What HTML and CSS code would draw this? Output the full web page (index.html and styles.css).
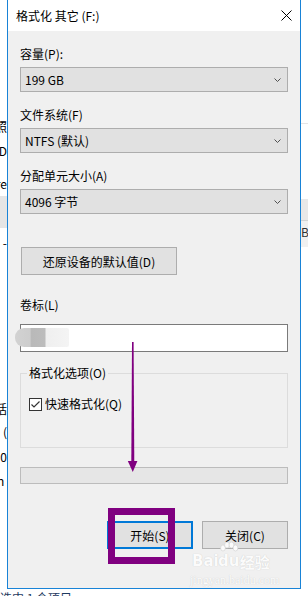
FILE: index.html
```html
<!DOCTYPE html>
<html lang="zh-CN">
<head>
    <meta charset="UTF-8">
    <meta name="viewport" content="width=device-width, initial-scale=1.0">
    <title>格式化 其它 (F:)</title>
    <link rel="stylesheet" href="styles.css">
</head>
<body>
    <div class="screen">
        <!-- bits of the explorer window behind the dialog -->
        <div class="behind-left">
            <div class="frag frag-1">关照</div>
            <div class="frag frag-2">ID</div>
            <div class="frag frag-3">re</div>
            <div class="frag-block"></div>
            <div class="frag frag-4">-</div>
            <div class="frag frag-5">包括</div>
            <div class="frag frag-6">(</div>
            <div class="frag frag-7">0</div>
            <div class="frag frag-8">n&nbsp;</div>
        </div>

        <div class="dialog">
            <div class="titlebar">
                <span class="title">格式化 其它 (F:)</span>
                <svg class="close" width="11" height="11" viewBox="0 0 11 11">
                    <path d="M0.5 0.5 L10.5 10.5 M10.5 0.5 L0.5 10.5" stroke="#000" stroke-width="1" fill="none"/>
                </svg>
            </div>

            <div class="panel">
                <div class="label first">容量(P):</div>
                <div class="combo">
                    <span>199 GB</span>
                    <svg width="7" height="4" viewBox="0 0 7 4"><polyline points="0.5,0.5 3.5,3.5 6.5,0.5" stroke="#505050" fill="none"/></svg>
                </div>

                <div class="label">文件系统(F)</div>
                <div class="combo">
                    <span>NTFS (默认)</span>
                    <svg width="7" height="4" viewBox="0 0 7 4"><polyline points="0.5,0.5 3.5,3.5 6.5,0.5" stroke="#505050" fill="none"/></svg>
                </div>

                <div class="label">分配单元大小(A)</div>
                <div class="combo">
                    <span>4096 字节</span>
                    <svg width="7" height="4" viewBox="0 0 7 4"><polyline points="0.5,0.5 3.5,3.5 6.5,0.5" stroke="#505050" fill="none"/></svg>
                </div>

                <div class="btn btn-reset">还原设备的默认值(D)</div>

                <div class="label label-volume">卷标(L)</div>
                <div class="textbox">
                    <div class="blur"></div>
                </div>

                <fieldset class="group">
                    <legend>格式化选项(O)</legend>
                    <div class="check-row">
                        <svg width="13" height="13" viewBox="0 0 13 13">
                            <rect x="0.5" y="0.5" width="12" height="12" fill="#fff" stroke="#333"/>
                            <polyline points="2.5,6.5 5,9 10.5,3.5" stroke="#333" stroke-width="1.2" fill="none"/>
                        </svg>
                        <span>快速格式化(Q)</span>
                    </div>
                </fieldset>

                <div class="progress"></div>

                <div class="actions">
                    <div class="btn btn-default">开始(S)</div>
                    <div class="btn">关闭(C)</div>
                </div>
            </div>
        </div>

        <div class="behind-right">
            <div class="rule"></div>
            <div class="col-head"></div>
            <div class="col-cell">B</div>
        </div>
    </div>

    <div class="statusbar">选中 1 个项目</div>

    <!-- annotations drawn over the screenshot -->
    <svg class="arrow" width="16" height="135" viewBox="0 0 16 135">
        <polygon points="7,2 8.6,2 9.3,122 6.3,122" fill="#800080"/>
        <polygon points="2.8,121 12.4,121 7.8,132" fill="#800080"/>
    </svg>
    <div class="highlight"></div>

    <div class="watermark">
        <div class="wm-logo">
            <span class="wm-bai">Bai</span>
            <span class="wm-paw">
                <svg width="20" height="12" viewBox="0 0 20 12">
                    <ellipse cx="4" cy="6" rx="2.4" ry="3" />
                    <ellipse cx="8" cy="3" rx="2.4" ry="3" />
                    <ellipse cx="12.5" cy="3" rx="2.4" ry="3" />
                    <ellipse cx="16.5" cy="6" rx="2.4" ry="3" />
                </svg>
                <span>du</span>
            </span>
            <span class="wm-jy">经验</span>
        </div>
        <div class="wm-url">jingyan.baidu.com</div>
    </div>
</body>
</html>
```

FILE: styles.css
```css
* {
    box-sizing: border-box;
}

body {
    margin: 0;
    width: 308px;
    height: 596px;
    overflow: hidden;
    position: relative;
    background-color: #ffffff;
    font-family: "Noto Sans CJK SC", "Microsoft YaHei", sans-serif;
    font-size: 12px;
    color: #000000;
}

.screen {
    display: flex;
    height: 589px;
}

/* Window behind the dialog */
.behind-left {
    width: 7px;
    display: flex;
    flex-direction: column;
    align-items: flex-end;
    overflow: hidden;
}

.frag {
    white-space: nowrap;
    line-height: 12px;
    flex-shrink: 0;
}

.frag-1 { margin-top: 121px; }
.frag-2 { margin-top: 12px; }
.frag-3 { margin-top: 21px; }
.frag-4 { margin-top: 9px; }
.frag-5 { margin-top: 154px; }
.frag-6 { margin-top: 11px; }
.frag-7 { margin-top: 13px; }
.frag-8 { margin-top: 12px; }

.frag-block {
    width: 7px;
    height: 32px;
    margin-top: 6px;
    flex-shrink: 0;
    background-color: #e5e5e5;
}

.behind-right {
    width: 7px;
    overflow: hidden;
}

.behind-right .rule {
    height: 1px;
    margin-top: 123px;
    background-color: #e5e5e5;
}

.behind-right .col-head {
    height: 22px;
    margin-top: 75px;
    background-color: #e8e8e8;
    border-bottom: 1px solid #d4d4d4;
}

.behind-right .col-cell {
    height: 26px;
    background-color: #f0f0f0;
    line-height: 22px;
    font-size: 12px;
    color: #333;
}

.statusbar {
    height: 7px;
    line-height: 17px;
    color: #1e3a5f;
    white-space: nowrap;
    overflow: hidden;
}

/* Dialog */
.dialog {
    width: 294px;
    height: 589px;
    border: 1px solid #1883d7;
    border-top: none;
    background-color: #f0f0f0;
    display: flex;
    flex-direction: column;
}

.titlebar {
    height: 31px;
    flex-shrink: 0;
    background-color: #ffffff;
    display: flex;
    align-items: center;
    justify-content: space-between;
    padding: 0 8px;
}

.title {
    line-height: 16px;
}

.panel {
    padding: 0 12px;
    display: flex;
    flex-direction: column;
}

.label {
    line-height: 16px;
    margin-top: 15px;
}

.label.first {
    margin-top: 15px;
}

.label-volume {
    margin-top: 22px;
}

.combo {
    height: 25px;
    margin-top: 5px;
    padding: 0 6px 0 4px;
    background-color: #e1e1e1;
    border: 1px solid #adadad;
    display: flex;
    align-items: center;
    justify-content: space-between;
}

.btn {
    height: 28px;
    background-color: #e1e1e1;
    border: 1px solid #adadad;
    display: flex;
    align-items: center;
    justify-content: center;
    width: 86px;
}

.btn-reset {
    width: 156px;
    margin-top: 33px;
    margin-left: 1px;
}

.btn-default {
    border: 2px solid #0078d7;
}

.textbox {
    position: relative;
    height: 28px;
    margin-top: 11px;
    background-color: #ffffff;
    border: 1px solid #7a7a7a;
}

/* blurred-out volume name */
.blur {
    position: absolute;
    left: -6px;
    top: 3px;
    width: 54px;
    height: 19px;
    border-radius: 9px 2px 2px 9px;
    background: linear-gradient(to right, #d2d2d2 0%, #cdcdcd 28%, #b9b9b9 30%, #bcbcbc 55%, #efefef 58%, #f4f4f4 100%);
}

.group {
    margin: 13px 0 0 0;
    padding: 15px 8px 35px 8px;
    border: 1px solid #dcdcdc;
}

.group legend {
    padding: 0 2px;
    margin-left: -2px;
    line-height: 16px;
}

.check-row {
    display: flex;
    align-items: center;
    gap: 3px;
    line-height: 16px;
}

.check-row svg {
    display: block;
}

.progress {
    height: 17px;
    margin-top: 19px;
    background-color: #e6e6e6;
    border: 1px solid #bcbcbc;
}

.actions {
    margin-top: 37px;
    display: flex;
    justify-content: flex-end;
    gap: 9px;
}

/* Annotations */
.arrow {
    position: absolute;
    left: 125px;
    top: 340px;
}

.highlight {
    position: absolute;
    left: 108px;
    top: 508px;
    width: 67px;
    height: 56px;
    border: 7px solid #800080;
}

.watermark {
    position: absolute;
    left: 190px;
    top: 543px;
    width: 96px;
    color: #fbfbfb;
    text-shadow: 0 0 1px #c4c4c4;
}

.wm-logo {
    display: flex;
    align-items: flex-end;
    height: 26px;
    font-family: "DejaVu Sans", sans-serif;
    font-weight: bold;
    font-size: 15px;
    line-height: 15px;
}

.wm-bai {
    margin-left: 2px;
}

.wm-paw {
    display: flex;
    flex-direction: column;
    align-items: center;
    width: 20px;
}

.wm-paw svg {
    fill: #fbfbfb;
    stroke: #d0d0d0;
    stroke-width: 0.6;
}

.wm-jy {
    margin-left: 1px;
    font-family: "Noto Sans CJK SC", sans-serif;
    font-size: 15px;
}

.wm-url {
    margin-top: 5px;
    font-family: "Liberation Serif", serif;
    font-size: 12px;
    line-height: 12px;
}
```
